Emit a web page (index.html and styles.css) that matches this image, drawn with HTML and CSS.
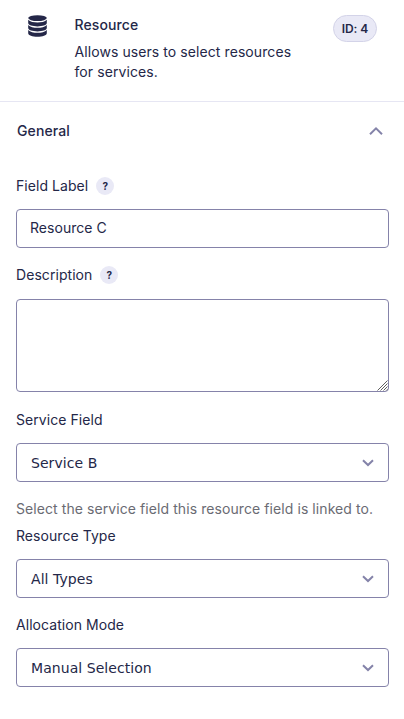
FILE: index.html
```
<!DOCTYPE html>
<html lang="en">
<head>
<meta charset="utf-8">
<title>Resource field settings</title>
<link rel="stylesheet" href="styles.css">
</head>
<body>
<header class="head">
  <svg class="db" viewBox="0 0 19 22" width="19" height="22">
    <ellipse cx="9.5" cy="3.1" rx="9.3" ry="2.9"/>
    <path d="M.2 4.800C2 7 5.700 7.500 9.500 7.500s7.500-.5 9.300-2.700v3.300c0 2.100-4.300 3.300-9.300 3.300S.2 10.200.2 8.100z"/>
    <path d="M.2 9.900C2 12.100 5.700 12.700 9.500 12.700s7.500-.6 9.300-2.800v3.200c0 2.100-4.300 3.300-9.300 3.300S.2 15.200.2 13.100z"/>
    <path d="M.2 14.900C2 17.100 5.700 17.700 9.500 17.700s7.500-.6 9.300-2.800v3.300c0 2.100-4.300 3.500-9.300 3.500S.2 20.300.2 18.200z"/>
  </svg>
  <div class="intro">
    <h1>Resource</h1>
    <p>Allows users to select resources for services.</p>
  </div>
  <span class="badge">ID: 4</span>
</header>
<main>
  <div class="section">
    <h2>General</h2>
    <svg width="14" height="8" viewBox="0 0 14 8"><path class="chev" d="M1 7.200 7 1.400 13 7.200"/></svg>
  </div>
  <div class="field">
    <div class="label"><label for="name">Field Label</label><span class="help">?</span></div>
    <input id="name" class="control" type="text" value="Resource C">
  </div>
  <div class="field description">
    <div class="label"><label for="desc">Description</label><span class="help">?</span></div>
    <div class="areawrap"><textarea id="desc" class="control area"></textarea>
      <svg class="grip" width="11" height="11" viewBox="0 0 11 11"><path d="M.5 10.500 10.500.5M3.500 10.500 10.500 3.500M6.500 10.500 10.500 6.500M9.300 10.500 10.500 9.300"/></svg></div>
  </div>
  <div class="field service">
    <div class="label"><label for="service">Service Field</label></div>
    <div class="pick"><select id="service" class="control"><option>Service B</option></select>
      <svg width="12" height="8" viewBox="0 0 12 8"><path class="chev" d="M1 1.200 6 6 11 1.200"/></svg></div>
    <p class="note">Select the service field this resource field is linked to.</p>
  </div>
  <div class="field">
    <div class="label"><label for="type">Resource Type</label></div>
    <div class="pick"><select id="type" class="control"><option>All Types</option></select>
      <svg width="12" height="8" viewBox="0 0 12 8"><path class="chev" d="M1 1.200 6 6 11 1.200"/></svg></div>
  </div>
  <div class="field">
    <div class="label"><label for="mode">Allocation Mode</label></div>
    <div class="pick"><select id="mode" class="control"><option>Manual Selection</option></select>
      <svg width="12" height="8" viewBox="0 0 12 8"><path class="chev" d="M1 1.200 6 6 11 1.200"/></svg></div>
  </div>
</main>
</body>
</html>
```
FILE: styles.css
```
* { box-sizing: border-box; }
body { margin: 0; background: #fff; color: #242748; font: 14px/20px Inter, sans-serif; letter-spacing: .08px; overflow: hidden; }
h1, h2, p { margin: 0; }
h1, h2 { font-size: 14px; line-height: 20px; font-weight: 500; letter-spacing: .1px; }
.head { display: flex; align-items: flex-start; height: 102px; padding: 15px 27px 0 28px; border-bottom: 1px solid #e6e6f3; }
.db { flex: none; fill: #242748; }
.intro { width: 230px; margin-left: 27.5px; }
.intro p { margin-top: 7px; }
.badge { margin-left: auto; height: 27px; width: 44px; border: 1px solid #d3d3e8; border-radius: 14px; background: #e9e9f6; font-size: 12px; line-height: 25px; font-weight: 600; text-align: center; white-space: nowrap; letter-spacing: -.1px; }
main { padding: 19px 15px 0 16px; }
.section { display: flex; align-items: center; justify-content: space-between; height: 20px; padding: 0 6px 0 1px; margin-bottom: 36px; }
.chev { fill: none; stroke: #8483a9; stroke-width: 2; }
.field { display: flex; flex-direction: column; margin-bottom: 18px; }
.label { display: flex; align-items: center; gap: 8px; height: 18px; margin-bottom: 14px; letter-spacing: .06px; }
.help { width: 18px; height: 18px; border-radius: 50%; background: #e9e9f6; font-size: 10px; line-height: 18px; font-weight: 700; text-align: center; letter-spacing: 0; }
.control { display: block; width: 100%; height: 39px; margin: 0; padding: 0 13px 2px; border: 1px solid #8583aa; border-radius: 4px; background: #fff; color: #242748; font: 14px/20px Inter, sans-serif; letter-spacing: .04px; outline: 0; }
.description { margin-bottom: 19px; }
.description .label { margin-bottom: 15px; }
.areawrap { position: relative; }
.area { height: 93px; resize: none; }
.grip { position: absolute; right: 1.5px; bottom: 1.5px; fill: none; stroke: #606060; stroke-width: 1; }
.pick { display: grid; align-items: center; }
.pick > * { grid-area: 1 / 1; }
.pick svg { justify-self: end; margin-right: 15px; pointer-events: none; }
select.control { appearance: none; padding: 0 14px; font-family: "DejaVu Sans", sans-serif; font-size: 14px; letter-spacing: .06px; }
.service { margin-bottom: 8px; }
.note { margin-top: 17px; color: #6a6b73; white-space: nowrap; }
```
